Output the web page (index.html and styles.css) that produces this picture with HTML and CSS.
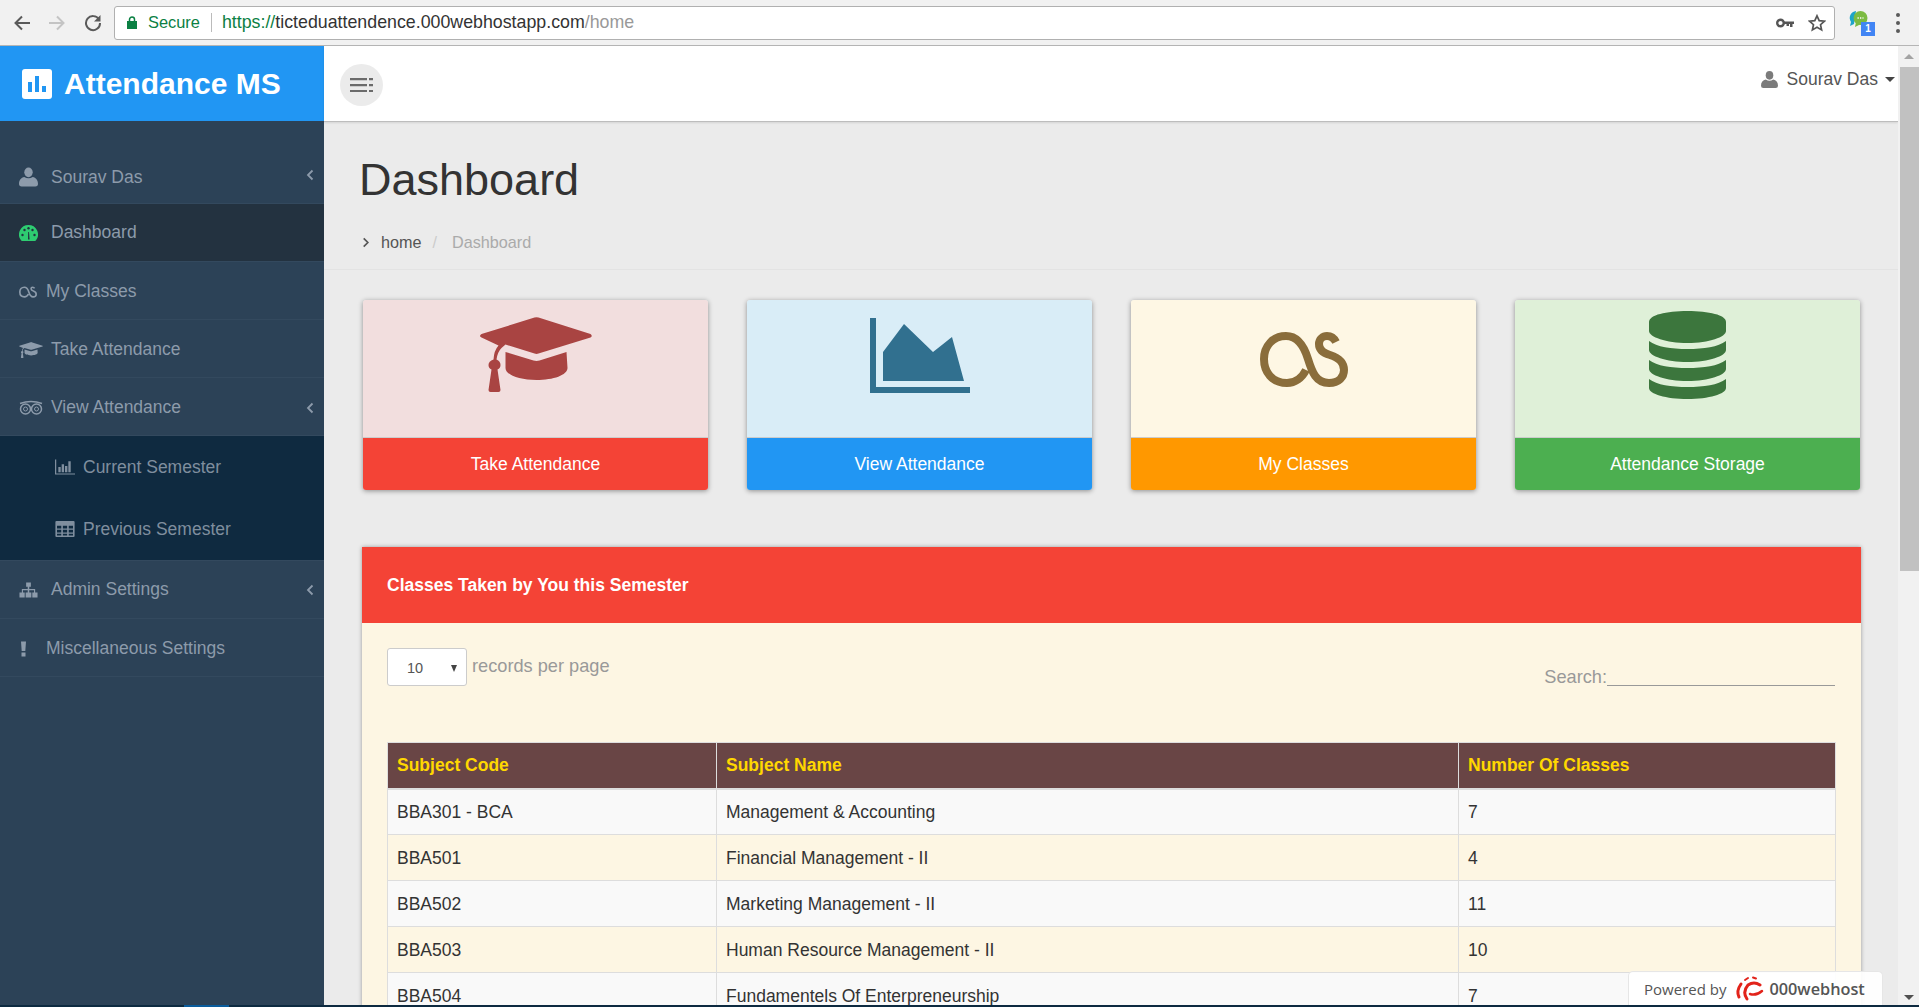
FILE: index.html
```html
<!DOCTYPE html>
<html lang="en">

<head>
    <meta charset="UTF-8">
    <title>Attendance MS</title>
    <link rel="stylesheet" href="styles.css">
</head>

<body>
    <!-- shared icons -->
    <svg class="defs" width="0" height="0">
        <symbol id="i-cap" viewBox="0 0 113 75">
            <path d="M55 .6q2-.8 4 0L111 17q2.500 2 0 3.500L59 36.500q-2 .8-4 0L26 27.500 22 31q-4 4-5 11.500 4 1.500 4 5.500 0 3-3 4.500L21 73q0 2-2 2H11q-2 0-2-2l3-20.500q-3-1.500-3-4.500 0-4 5-5.500 .5-9 5-14L2 20.500q-3-1.500 0-3.500z" />
            <path d="M26 35l28 8.500q3 .8 6 0L87 35l1 16c0 7-14 12-31 12S26 58 26 51z" />
        </symbol>
        <symbol id="i-chart" viewBox="0 0 100 75">
            <path d="M0 0h6v69h94v6H0z" />
            <path d="M13 34L34 6l29 28 19-15 12 44H13z" />
        </symbol>
        <symbol id="i-lastfm" viewBox="0 0 88 55">
            <path fill="none" stroke="currentColor" stroke-width="8" d="M46 38C42 46 35 51 27 51 12 51 4 40 4 27 4 14 13 4 26 4 38 4 44 14 48 27 52 40 56 51 69 51 79 51 84 45 84 38 84 30 79 26 70 23 63 21 59 18 59 12 59 7 63 4 67 4 71 4 74 6 76 10" />
        </symbol>
        <symbol id="i-db" viewBox="0 0 77 88">
            <path d="M0 11C0 4 17 0 38.500 0S77 4 77 11V20C77 26 60 32 38.500 32S0 26 0 20z" />
            <path d="M0 30C8 36 22 38 38.500 38S69 36 77 30V39C77 45 60 51 38.500 51S0 45 0 39z" />
            <path d="M0 49C8 55 22 57 38.500 57S69 55 77 49V58C77 64 60 70 38.500 70S0 64 0 58z" />
            <path d="M0 68C8 74 22 76 38.500 76S69 74 77 68V77C77 83 60 88 38.500 88S0 83 0 77z" />
        </symbol>
        <symbol id="i-user" viewBox="0 0 18 18">
            <ellipse cx="9" cy="4.600" rx="4" ry="4.600" />
            <path d="M0 15.500C0 12 2 9.500 5 9q4 2.500 8 0c3 .5 5 3 5 6.500Q18 18 15.500 18h-13Q0 18 0 15.500z" />
        </symbol>
        <symbol id="i-chev" viewBox="0 0 8 12">
            <path fill="none" stroke="currentColor" stroke-width="1.800" d="M6.500 1.500L2 6l4.500 4.500" />
        </symbol>
    </svg>

    <div id="toolbar">
        <svg class="nav-ico" viewBox="0 0 18 18"><path fill="none" stroke="#5a5a5a" stroke-width="2" d="M17 9H3M9 2.500L2.500 9 9 15.500" /></svg>
        <svg class="nav-ico off" viewBox="0 0 18 18"><path fill="none" stroke="#c4c4c4" stroke-width="2" d="M1 9h14M9 2.500L15.500 9 9 15.500" /></svg>
        <svg class="nav-ico" viewBox="0 0 18 18"><path fill="none" stroke="#5a5a5a" stroke-width="2" d="M15 5.500A7 7 0 1 0 16 9" /><path fill="#5a5a5a" d="M16.500 1v6.500H10z" /></svg>
        <div id="omnibox">
            <svg class="lock" viewBox="0 0 10 13"><path fill="#0b8043" d="M0 5h10v8H0z" /><path fill="none" stroke="#0b8043" stroke-width="1.500" d="M2.500 5V3.500a2.500 2.500 0 0 1 5 0V5" /></svg>
            <span class="secure">Secure</span>
            <span class="url"><span class="scheme">https://</span>ticteduattendence.000webhostapp.com<span class="tail">/home</span></span>
            <svg class="key" viewBox="0 0 18 10"><circle cx="4.500" cy="5" r="3.300" fill="none" stroke="#555" stroke-width="2.400" /><path fill="#555" d="M8 3.500h10v2.500h-1.500v3H14V6h-1v2h-2.500V6H8z" /></svg>
            <svg class="star" viewBox="0 0 18 18"><path fill="none" stroke="#555" stroke-width="1.700" d="M9 1.800l2.200 4.800 5.200.6-3.900 3.500 1.100 5.200L9 13.300l-4.600 2.600 1.100-5.200L1.600 7.200l5.200-.6z" /></svg>
        </div>
        <div id="extension">
            <svg viewBox="0 0 20 20" width="20" height="20"><path fill="#1fa5c9" d="M7 1a7 7 0 0 0-5 11l-1 4 4-2z" /><circle cx="11.500" cy="8" r="7" fill="#7cbb42" /><path fill="#7cbb42" d="M7 12l-1 5 6-3z" /><path stroke="#fff" stroke-width="1.300" stroke-dasharray="1.300 1.200" d="M8.500 8h6" /></svg>
            <span class="ext-badge">1</span>
        </div>
        <div id="dots"><i></i><i></i><i></i></div>
    </div>

    <div id="app">
        <aside id="sidebar">
            <div class="brand">
                <span class="brand-ico"><i class="b1"></i><i class="b2"></i><i class="b3"></i></span>
                Attendance MS
            </div>
            <ul class="menu">
                <li class="item first"><svg class="ico narrow"><use href="#i-user" /></svg>Sourav Das<svg class="chev"><use href="#i-chev" /></svg></li>
                <li class="item active flat">
                    <svg class="ico narrow green" viewBox="0 0 19 16"><path d="M9.500 0A9.500 9.500 0 0 0 2 15.300q.4.700 1 .7h13q.6 0 1-.7A9.500 9.500 0 0 0 9.500 0z" /><g fill="#233240"><circle cx="3.500" cy="10" r="1.200" /><circle cx="5.500" cy="5" r="1.200" /><circle cx="9.500" cy="3.200" r="1.200" /><circle cx="13.500" cy="5" r="1.200" /><circle cx="15.500" cy="10" r="1.200" /><path d="M9 14.500l.2-7.500h.8l.6 7.500z" /></g></svg>
                    Dashboard
                </li>
                <li class="item tight"><svg class="ico"><use href="#i-lastfm" /></svg>My Classes</li>
                <li class="item"><svg class="ico"><use href="#i-cap" /></svg>Take Attendance</li>
                <li class="item">
                    <svg class="ico" viewBox="0 0 24 14"><g fill="none" stroke="currentColor"><circle cx="6.500" cy="8" r="5" stroke-width="1.500" /><circle cx="17.500" cy="8" r="5" stroke-width="1.500" /><circle cx="6.500" cy="8" r="2" /><circle cx="17.500" cy="8" r="2" /><path stroke-width="1.500" d="M1 2.500Q12-1.500 23 2.500" /></g></svg>
                    View Attendance<svg class="chev"><use href="#i-chev" /></svg>
                </li>
                <li class="sub">
                    <div class="sub-item">
                        <svg class="sub-ico" viewBox="0 0 21 16"><path fill="currentColor" d="M0 0h1.300v14.700H21V16H0zM3.500 8h2.500v5.500H3.500zM7 5h2.500v8.500H7zM10.500 7H13v6.500h-2.500zM14 2h2.500v11.500H14z" /></svg>
                        Current Semester
                    </div>
                    <div class="sub-item">
                        <svg class="sub-ico" viewBox="0 0 18 15"><path fill="currentColor" fill-rule="evenodd" d="M1 0h16q1 0 1 1v13q0 1-1 1H1q-1 0-1-1V1q0-1 1-1zM1.500 4.500V7h4V4.500zM7 4.500V7h4V4.500zM12.500 4.500V7h4V4.500zM1.500 8.300v2.400h4V8.300zM7 8.300v2.400h4V8.300zM12.500 8.300v2.400h4V8.300zM1.500 12v1.500h4V12zM7 12v1.500h4V12zM12.500 12v1.500h4V12z" /></svg>
                        Previous Semester
                    </div>
                </li>
                <li class="item flat">
                    <svg class="ico narrow" viewBox="0 0 20 16"><path fill="currentColor" d="M7.500 0h5v4.500h-1.700V7H17v3.500h2.500V16h-5.500v-5.500h1.800V8.200h-5v2.300H13V16H7v-5.500h2.200V8.200h-5v2.300H6V16H.5v-5.500H3V7h6.200V4.500H7.500z" /></svg>
                    Admin Settings<svg class="chev"><use href="#i-chev" /></svg>
                </li>
                <li class="item tight">
                    <svg class="ico" viewBox="0 0 18 15"><path fill="currentColor" d="M2 0h5L6.300 9.500H2.700zM2.500 11h4v4h-4z" /></svg>
                    Miscellaneous Settings
                </li>
            </ul>
        </aside>

        <div id="content">
            <header class="topbar">
                <button class="toggle">
                    <svg viewBox="0 0 23 14" width="23" height="14"><path fill="#6b6b6b" d="M0 0h17v2.200H0zM19 0h4v2.200h-4zM0 6h17v2.200H0zM19 6h4v2.200h-4zM0 12h17v2.200H0zM19 12h4v2.200h-4z" /></svg>
                </button>
                <div class="top-user">
                    <svg class="top-user-ico"><use href="#i-user" /></svg>
                    Sourav Das
                    <span class="caret"></span>
                </div>
            </header>

            <main class="page">
                <div class="page-head">
                    <h1>Dashboard</h1>
                    <div class="crumbs">
                        <svg class="crumb-chev" viewBox="0 0 8 12"><path fill="none" stroke="#555" stroke-width="1.800" d="M1.500 1.500L6 6l-4.500 4.500" /></svg>
                        <span class="crumb-home">home</span>
                        <span class="crumb-sep">/</span>
                        <span>Dashboard</span>
                    </div>
                </div>

                <div class="page-body">
                    <div class="cards">
                        <div class="card danger">
                            <div class="card-top"><svg class="big-cap"><use href="#i-cap" /></svg></div>
                            <div class="card-foot">Take Attendance</div>
                        </div>
                        <div class="card info">
                            <div class="card-top"><svg class="big-chart"><use href="#i-chart" /></svg></div>
                            <div class="card-foot">View Attendance</div>
                        </div>
                        <div class="card warning">
                            <div class="card-top"><svg class="big-lastfm"><use href="#i-lastfm" /></svg></div>
                            <div class="card-foot">My Classes</div>
                        </div>
                        <div class="card success">
                            <div class="card-top"><svg class="big-db"><use href="#i-db" /></svg></div>
                            <div class="card-foot">Attendance Storage</div>
                        </div>
                    </div>

                    <section class="panel">
                        <div class="panel-head">Classes Taken by You this Semester</div>
                        <div class="panel-body">
                            <div class="tools">
                                <div class="per-page">
                                    <span class="per-select">10<span class="per-arrow"></span></span>
                                    <span class="per-label">records per page</span>
                                </div>
                                <div class="search">Search:<span class="search-line"></span></div>
                            </div>
                            <table>
                                <thead>
                                    <tr>
                                        <th class="col-code">Subject Code</th>
                                        <th class="col-name">Subject Name</th>
                                        <th>Number Of Classes</th>
                                    </tr>
                                </thead>
                                <tbody>
                                    <tr><td>BBA301 - BCA</td><td>Management &amp; Accounting</td><td>7</td></tr>
                                    <tr><td>BBA501</td><td>Financial Management - II</td><td>4</td></tr>
                                    <tr><td>BBA502</td><td>Marketing Management - II</td><td>11</td></tr>
                                    <tr><td>BBA503</td><td>Human Resource Management - II</td><td>10</td></tr>
                                    <tr><td>BBA504</td><td>Fundamentels Of Enterpreneurship</td><td>7</td></tr>
                                </tbody>
                            </table>
                        </div>
                    </section>
                </div>
            </main>
        </div>

        <div id="scrollbar">
            <span class="arrow-up"></span>
            <span class="thumb"></span>
            <span class="arrow-down"></span>
        </div>

        <div id="poweredBy">
            <span>Powered by</span>
            <svg viewBox="0 0 30 25" width="30" height="25"><g fill="none" stroke="#e2231a" stroke-linecap="round"><path stroke-width="3" d="M5 21Q2 15 7 8" /><path stroke-width="3" d="M13 23Q8 16 14 9q6-4 12 0" /><path stroke-width="2.500" d="M16 18q6 2 12-3" /><path stroke-width="2" d="M11 4l3-2M19 1.500l3 1" /></g></svg>
            <span class="host">000webhost</span>
        </div>
    </div>

    <div id="taskbar"><span></span></div>
</body>

</html>
```

FILE: styles.css
```css
* {
    margin: 0;
    padding: 0;
    box-sizing: border-box;
}

html,
body {
    height: 100%;
    overflow: hidden;
}

body {
    display: flex;
    flex-direction: column;
    font-family: "Liberation Sans", Arial, sans-serif;
    font-size: 17.5px;
    color: #333;
    background: #ebebeb;
}

.defs {
    position: absolute;
}

/* browser toolbar */
#toolbar {
    height: 46px;
    flex: none;
    display: flex;
    align-items: center;
    background: #f1f1f1;
    border-bottom: 1px solid #b5b5b5;
    padding-left: 13px;
}

.nav-ico {
    width: 18px;
    height: 18px;
    margin-right: 17px;
}

.nav-ico.off {
    margin-right: 18px;
}

#omnibox {
    width: 1721px;
    height: 34px;
    margin-left: -5px;
    display: flex;
    align-items: center;
    background: #fff;
    border: 1px solid #b0b0b0;
    border-radius: 3px;
    padding-left: 12px;
}

.lock {
    width: 10px;
    height: 13px;
}

.secure {
    font-size: 16.400px;
    color: #0b8043;
    margin-left: 11px;
    padding-right: 11px;
    border-right: 1px solid #bbb;
}

.url {
    font-size: 17.800px;
    color: #333;
    margin-left: 10px;
    flex: 1;
}

.scheme {
    color: #0b8043;
}

.tail {
    color: #999;
}

.key {
    width: 18px;
    height: 10px;
    margin-right: 14px;
}

.star {
    width: 18px;
    height: 18px;
    margin-right: 8px;
}

#extension {
    position: relative;
    width: 24px;
    height: 26px;
    margin-left: 14px;
}

.ext-badge {
    position: absolute;
    right: -2px;
    bottom: 0;
    width: 14px;
    height: 14px;
    background: #4285f4;
    color: #fff;
    font-size: 10px;
    font-weight: bold;
    line-height: 14px;
    text-align: center;
}

#dots {
    margin-left: 23px;
    display: flex;
    flex-direction: column;
    gap: 4px;
}

#dots i {
    width: 4px;
    height: 4px;
    border-radius: 50%;
    background: #5a5a5a;
}

/* app layout */
#app {
    position: relative;
    flex: 1;
    min-height: 0;
    display: flex;
}

#sidebar {
    width: 324px;
    flex: none;
    background: #2c4257;
    color: #8d9bab;
}

.brand {
    height: 75px;
    display: flex;
    align-items: center;
    padding-left: 22px;
    background: #2196f3;
    color: #fff;
    font-size: 30px;
    font-weight: bold;
}

.brand-ico {
    width: 30px;
    height: 30px;
    margin-right: 12px;
    display: flex;
    align-items: flex-end;
    justify-content: center;
    gap: 3px;
    padding-bottom: 7px;
    background: #fff;
    border-radius: 3px;
}

.brand-ico i {
    width: 4px;
    background: #2196f3;
}

.b1 {
    height: 10px;
}

.b2 {
    height: 16px;
}

.b3 {
    height: 6px;
}

.menu {
    list-style: none;
    padding-top: 25px;
}

.item {
    height: 58px;
    display: flex;
    align-items: center;
    padding: 2px 10px 0 19px;
    border-bottom: 1px solid #33495e;
}

.item.first {
    padding-top: 5px;
}

.item.first .chev {
    margin-top: -5px;
}

.item.flat {
    padding-top: 0;
}

.item.active {
    background: #233240;
}

.ico {
    width: 24px;
    height: 20px;
    margin-right: 8px;
    fill: #8d9bab;
    color: #8d9bab;
    flex: none;
}

.ico.narrow {
    width: 19px;
    margin-right: 13px;
}

.ico.green {
    fill: #2ecc71;
}

.item.tight .ico {
    width: 18px;
    margin-right: 9px;
}

.chev {
    width: 8px;
    height: 12px;
    margin-left: auto;
    color: #8d9bab;
}

.sub {
    height: 125px;
    background: #0f2a40;
    border-bottom: 1px solid #33495e;
}

.sub-item {
    height: 62px;
    display: flex;
    align-items: center;
    padding-left: 55px;
    color: #7f8e9e;
}

.sub-ico {
    width: 20px;
    height: 16px;
    margin-right: 8px;
    flex: none;
}

#content {
    flex: 1;
    min-width: 0;
    display: flex;
    flex-direction: column;
}

.topbar {
    height: 76px;
    flex: none;
    display: flex;
    justify-content: space-between;
    background: #fff;
    border-bottom: 1px solid #bdbdbd;
    box-shadow: 0 1px 2px rgba(0, 0, 0, .1);
    padding: 18px 3px 0 16px;
}

.toggle {
    width: 43px;
    height: 42px;
    border: 0;
    border-radius: 50%;
    background: #ebebeb;
    display: flex;
    align-items: center;
    justify-content: center;
}

.top-user {
    display: flex;
    align-items: center;
    height: 30px;
    color: #555;
}

.top-user-ico {
    width: 17px;
    height: 19px;
    margin-right: 9px;
    fill: #7b7b7b;
}

.caret {
    width: 0;
    height: 0;
    margin-left: 7px;
    border-left: 5px solid transparent;
    border-right: 5px solid transparent;
    border-top: 5px solid #444;
}

.page {
    flex: 1;
    min-height: 0;
    overflow: hidden;
}

.page-head {
    height: 148px;
    padding: 32px 0 0 35px;
    border-bottom: 1px solid #e3e3e3;
}

h1 {
    font-size: 45px;
    font-weight: 400;
    line-height: 52px;
    color: #333;
}

.crumbs {
    display: flex;
    align-items: center;
    margin-top: 26px;
    font-size: 16.200px;
    color: #aaa;
    line-height: 20px;
}

.crumb-chev {
    width: 8px;
    height: 11px;
    margin: 0 11px 0 3px;
}

.crumb-home {
    color: #555;
}

.crumb-sep {
    margin: 0 15px 0 11px;
    color: #ccc;
}

.page-body {
    padding: 30px 0 0 38px;
}

.cards {
    width: 1497px;
    margin-left: 1px;
    display: grid;
    grid-template-columns: repeat(4, 1fr);
    gap: 39px;
}

.card {
    height: 190px;
    display: flex;
    flex-direction: column;
    border-radius: 3px;
    overflow: hidden;
    box-shadow: 0 1px 5px rgba(0, 0, 0, .4);
}

.card-top {
    height: 138px;
    display: flex;
    align-items: center;
    justify-content: center;
    padding-bottom: 28px;
    border-bottom: 1px solid #ccc;
}

.card-foot {
    flex: 1;
    display: flex;
    align-items: center;
    justify-content: center;
    color: #fff;
}

.danger .card-top {
    background: #f2dede;
    fill: #a94442;
}

.danger .card-foot {
    background: #f44336;
}

.info .card-top {
    background: #d9edf7;
    fill: #31708f;
}

.info .card-foot {
    background: #2196f3;
}

.warning .card-top {
    background: #fef7e4;
    color: #8a6d3b;
    padding-bottom: 18px;
}

.warning .card-foot {
    background: #ff9800;
}

.success .card-top {
    background: #dff0d8;
    fill: #3c763d;
}

.success .card-foot {
    background: #4caf50;
}

.big-cap {
    width: 114px;
    height: 75px;
}

.big-chart {
    width: 100px;
    height: 75px;
    margin-top: 2px;
}

.big-lastfm {
    width: 88px;
    height: 55px;
}

.big-db {
    width: 77px;
    height: 88px;
}

.panel {
    width: 1499px;
    margin-top: 57px;
    background: #fdf6e3;
    box-shadow: 0 0 4px rgba(0, 0, 0, .35);
}

.panel-head {
    height: 76px;
    display: flex;
    align-items: center;
    padding-left: 25px;
    background: #f44336;
    color: #fff;
    font-weight: bold;
}

.panel-body {
    padding: 25px 25px 0 25px;
}

.tools {
    height: 94px;
    display: flex;
    justify-content: space-between;
    align-items: flex-start;
    font-size: 18.200px;
    color: #999;
}

.per-page {
    display: flex;
    align-items: center;
    gap: 5px;
}

.per-label {
    padding-bottom: 2px;
}

.per-select {
    width: 80px;
    height: 38px;
    display: flex;
    align-items: center;
    justify-content: space-between;
    padding: 2px 9px 0 19px;
    background: #fff;
    border: 1px solid #ccc;
    border-radius: 3px;
    color: #555;
    font-size: 14.500px;
}

.per-arrow {
    width: 0;
    height: 0;
    border-left: 3.500px solid transparent;
    border-right: 3.500px solid transparent;
    border-top: 7px solid #444;
}

.search {
    display: flex;
    align-items: flex-end;
    height: 38px;
    line-height: 17px;
    margin-right: 1px;
}

.search-line {
    width: 228px;
    border-bottom: 1px solid #999;
    height: 20px;
}

table {
    width: 100%;
    table-layout: fixed;
    border-collapse: collapse;
}

th,
td {
    height: 46px;
    padding: 1px 9px 0;
    border: 1px solid #ddd;
    text-align: left;
}

th {
    height: 46px;
    background: #694545;
    color: #ffd700;
    border-bottom-width: 2px;
}

.col-code {
    width: 329px;
}

.col-name {
    width: 742px;
}

tbody tr:nth-child(odd) {
    background: #f9f9f9;
}

/* fake scrollbar */
#scrollbar {
    width: 21px;
    flex: none;
    display: flex;
    flex-direction: column;
    align-items: center;
    background: #f1f1f1;
    padding-top: 8px;
}

.arrow-up,
.arrow-down {
    width: 0;
    height: 0;
    border-left: 5px solid transparent;
    border-right: 5px solid transparent;
}

.arrow-up {
    border-bottom: 5px solid #a3a3a3;
}

.thumb {
    width: 19px;
    height: 504px;
    margin: 8px 0 424px 2px;
    background: #c1c1c1;
}

.arrow-down {
    border-top: 5px solid #505050;
}

#poweredBy {
    position: absolute;
    right: 36px;
    bottom: 0;
    width: 255px;
    height: 34px;
    display: flex;
    align-items: center;
    padding-left: 15px;
    background: rgba(255, 255, 255, .92);
    border: 1px solid #e6e6e6;
    border-bottom: 0;
    border-radius: 5px 5px 0 0;
    font-family: "Open Sans", sans-serif;
    font-size: 15px;
    color: #555;
}

#poweredBy svg {
    margin: 0 5px 0 8px;
}

.host {
    font-weight: 600;
    font-size: 16.300px;
}

#taskbar {
    height: 2px;
    flex: none;
    background: #0d2a40;
}

#taskbar span {
    display: block;
    width: 45px;
    height: 2px;
    margin-left: 184px;
    background: #0a5c9c;
}
```
